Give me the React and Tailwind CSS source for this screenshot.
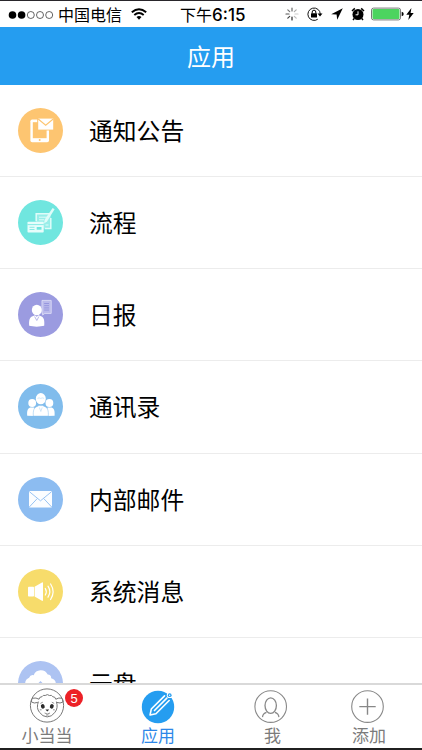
import React from "react";

const W = "#fff";

function Disc({ color, children }) {
  return (
    <svg viewBox="0 0 45 45" className="block size-[45px] shrink-0">
      <circle cx="22.5" cy="22.5" r="22.5" fill={color} />
      {children}
    </svg>
  );
}

function NoticeIcon() {
  const c = "#fdc571";
  return (
    <Disc color={c}>
      <rect x="12.4" y="11.5" width="18.6" height="22.7" rx="1.8" fill={W} />
      <rect x="14.8" y="14.2" width="13.8" height="16" fill={c} />
      <circle cx="21.7" cy="32" r="1" fill={c} />
      <path d="M19.2 9.7h16.5v12.8H19.2z" fill={c} />
      <path d="M20.2 10.6h15v11h-15z" fill={W} />
      <path d="M20.2 11l7.5 6.2 7.5-6.2" fill="none" stroke={c} strokeWidth="1.1" />
    </Disc>
  );
}

function FlowIcon() {
  const c = "#70e6df";
  return (
    <Disc color={c}>
      <path d="M18.2 13.8h14.6v14.6H18.2z" fill="#98eee9" />
      <g fill="none" stroke="#dffcf9" strokeWidth="1.5">
        <path d="M32 13.8H18.2v7.4M32.8 18v10.4h-6" />
        <path d="M21 17.2h8M21 19.8h5M27.5 25h3" strokeWidth="1" />
      </g>
      <path d="M34.6 8l2 1.2-7.6 12.2-2.9 2.2.5-3.8z" fill="#dffcf9" />
      <rect x="9.5" y="21.7" width="16.2" height="10.8" rx="0.8" fill="#e6fdfb" />
      <path d="M9.5 24.6h16.2M11.5 27.3h5M11.5 29.5h5" stroke={c} strokeWidth="0.8" />
      <rect x="18.7" y="27" width="4.8" height="2.7" fill={c} />
    </Disc>
  );
}

function DailyIcon() {
  const c = "#9b9be0";
  return (
    <Disc color={c}>
      <path d="M24 8.4h9.2v13h-6.4L24.6 23l.2-1.6H24z" fill="#babaeb" stroke="#dcdcf6" strokeWidth="0.9" />
      <path d="M26.2 11.5h4.8M26.2 13.7h4.8M26.2 15.9h4.8M26.2 18.1h4.8" stroke="#9292dc" strokeWidth="0.9" />
      <ellipse cx="18.8" cy="18" rx="5" ry="5.3" fill={W} />
      <path d="M11.2 33.8c-.4-5 .2-8.6 3.3-9.6l2.5-1 1.7 1.5 1.9-1.5 2.5 1c3 1 3.6 4.6 3.1 9.6-4 1.1-11 1.1-15 0z" fill={W} />
      <path d="M16.6 24.5l2.2 4 2.1-4" fill="none" stroke={c} strokeWidth="0.7" />
    </Disc>
  );
}

function ContactsIcon() {
  const c = "#80bcec";
  return (
    <Disc color={c}>
      <g fill={W}>
        <circle cx="14.2" cy="19" r="3.9" />
        <circle cx="31.4" cy="19" r="3.9" />
        <path d="M9.2 31.8c-.3-4.8.3-7.3 3-8.2h4l1.2 8.4zM36.6 31.8c.3-4.8-.3-7.3-3-8.2h-4L28.2 32z" />
      </g>
      <path d="M15.3 32.1c-.3-5.6.5-8.6 4-9.7l1.6-.8h3.8l1.6.8c3.5 1.1 4.3 4.1 4 9.7z" fill={W} stroke={c} strokeWidth="0.5" />
      <ellipse cx="22.8" cy="14.7" rx="5" ry="5.6" fill={W} />
      <path d="M19.5 14.4q1.6-1 3.2 0 1.7-1 3.4 0M21.4 23.5l1.4 4 1.4-4" fill="none" stroke="#bfdcf5" strokeWidth="0.7" />
    </Disc>
  );
}

function MailIcon() {
  const c = "#8cbcf1";
  return (
    <Disc color={c}>
      <rect x="11" y="14" width="23" height="16.5" rx="0.8" fill="#fbfdff" />
      <path d="M11.3 14.6l11.2 9.2 11.2-9.2M11.3 30l8-8.5M33.7 30l-8-8.5" fill="none" stroke={c} strokeWidth="0.9" />
    </Disc>
  );
}

function SystemIcon() {
  return (
    <Disc color="#f7dc6b">
      <rect x="10" y="17.8" width="6" height="9.7" rx="0.8" fill={W} />
      <path d="M16.6 17.7l7.4-4.3q1-.5 1 .7v17q0 1.2-1 .7l-7.4-4.3z" fill={W} />
      <path d="M27.3 19.5q2 3.2 0 6.5M30 17.2q3.6 5.5 0 11M32.6 15q5 7.8 0 15.5" fill="none" stroke={W} strokeWidth="1.2" strokeLinecap="round" />
    </Disc>
  );
}

function CloudIcon() {
  return (
    <Disc color="#adc3f2">
      <path d="M12.5 29a6.4 6.4 0 0 1-1.4-12.2 4 4 0 0 1 4.6-2.6 7.6 7.6 0 0 1 14-.6 3.6 3.6 0 0 1 3.5 3.6A6 6 0 0 1 32.5 29z" fill={W} />
      <path d="M22.5 20l-4 4h8z" fill="#adc3f2" />
    </Disc>
  );
}

const rows = [
  ["通知公告", NoticeIcon],
  ["流程", FlowIcon],
  ["日报", DailyIcon],
  ["通讯录", ContactsIcon],
  ["内部邮件", MailIcon],
  ["系统消息", SystemIcon],
  ["云盘", CloudIcon],
];

function StatusBar() {
  return (
    <div className="flex h-[27px] shrink-0 items-center border-t border-[#29262b] bg-white text-black">
      <svg viewBox="0 0 46 10" className="ml-2 mt-px h-[10px] w-[46px] shrink-0">
        <circle cx="4.5" cy="5" r="3.8" />
        <circle cx="13.6" cy="5" r="3.8" />
        <g fill="none" stroke="#222" strokeWidth="0.7">
          <circle cx="22.8" cy="5" r="3.5" />
          <circle cx="32" cy="5" r="3.5" />
          <circle cx="41.2" cy="5" r="3.5" />
        </g>
      </svg>
      <span className="ml-[4px] w-[65px] shrink-0 pt-[3px] text-[16px] leading-[24px] whitespace-nowrap">中国电信</span>
      <svg viewBox="0 0 16 12" className="ml-2 h-[12px] w-[16px] shrink-0" fill="none" stroke="#000" strokeWidth="1.9">
        <path d="M.8 4.2q7.2-6 14.4 0M3.3 7q4.7-4 9.4 0" />
        <path d="M5.5 8.9q2.5-2 5 0L8 11.7z" fill="#000" stroke="none" />
      </svg>
      <span className="ml-[33px] flex w-[71px] shrink-0 items-center text-[16px] leading-[24px] whitespace-nowrap">
        <span className="pt-[3px]">下午</span>
        <span className="pt-[2px] font-['Inter'] text-[17px] font-medium">6:15</span>
      </span>
      <svg viewBox="0 0 14 14" className="ml-[34px] size-[14px] shrink-0" fill="none" strokeWidth="1.2" strokeLinecap="round">
        <path d="M7 1v3" stroke="#666" />
        <path d="M11.2 2.8L9.3 4.7" stroke="#aaa" />
        <path d="M13 7h-3" stroke="#ccc" />
        <path d="M11.2 11.2L9.3 9.3" stroke="#bbb" />
        <path d="M7 13v-3" stroke="#222" />
        <path d="M2.8 11.2l1.9-1.9" stroke="#444" />
        <path d="M1 7h3" stroke="#555" />
        <path d="M2.8 2.8l1.9 1.9" stroke="#777" />
      </svg>
      <svg viewBox="0 0 16 14" className="ml-[8px] h-[14px] w-[16px] shrink-0">
        <path d="M10.8 12.2A6.2 6.2 0 1 1 13.3 7" fill="none" stroke="#111" strokeWidth="1" />
        <path d="M10.5 6.5h5L13 9.5z" />
        <rect x="4" y="6.2" width="6" height="4.4" rx=".5" />
        <path d="M5.2 6.5V5a1.8 1.8 0 0 1 3.6 0v1.5" fill="none" stroke="#000" strokeWidth="1" />
      </svg>
      <svg viewBox="0 0 12 12" className="ml-[8px] size-[12px] shrink-0">
        <path d="M11.8.2L.2 6.2l5.4.4.6 5.2z" />
      </svg>
      <svg viewBox="0 0 14 14" className="ml-[8px] size-[14px] shrink-0">
        <circle cx="7" cy="7.5" r="5.5" />
        <path d="M1 4L3.8 1.4M13 4l-2.8-2.6M3.2 11.5L2 13M10.8 11.5L12 13" stroke="#000" strokeWidth="1.5" />
        <path d="M7 4.3v3.5H4.6" fill="none" stroke="#fff" strokeWidth="1" />
      </svg>
      <svg viewBox="0 0 34 14" className="ml-[5px] h-[14px] w-[34px] shrink-0">
        <rect x="1.5" y="1.1" width="29" height="11.8" rx="2" fill="#fff" stroke="#777" strokeWidth="1" />
        <rect x="2.5" y="2.1" width="27" height="9.8" rx="1" fill="#4cd45f" />
        <path d="M31.7 4.8q2 .5 2 2.2t-2 2.2z" />
      </svg>
      <svg viewBox="0 0 8 12" className="ml-[2px] h-[12px] w-[8px] shrink-0">
        <path d="M5.4 0L.3 6.7h3L2.3 12 7.7 5H4.6z" />
      </svg>
    </div>
  );
}

function LambIcon() {
  return (
    <svg viewBox="0 0 36 36" className="block size-[36px]" fill="none" stroke="#777" strokeWidth="1">
      <circle cx="18" cy="17.5" r="16.6" />
      <path d="M10 11.3q.3-2.6 3-2.6 1-2 3.2-1.2 2.2-1.8 4.2 0 2.4-.8 3.4 1.2 2.6 0 3 2.6" />
      <path d="M10 11.2Q7 9.4 3.8 10.2q-1.6 1.2-1.4 3.8 2.8 1.8 6.4.4M26.8 11.2q3-1.8 6-1 1.4 1.2 1.2 3.8-2.8 1.8-6.2.4" />
      <path d="M9.4 13.6q-2.4 6.4 1 10.6 3.2 4.6 7.8 4.7 4.8 0 7.8-4.7 3.4-4.2 1.4-10.6" />
      <g fill="#2b2b2b" stroke="none">
        <ellipse cx="13.8" cy="18.4" rx="1.9" ry="2.3" transform="rotate(-20 13.8 18.4)" />
        <ellipse cx="22.8" cy="18.4" rx="1.9" ry="2.3" transform="rotate(20 22.8 18.4)" />
        <path d="M16.4 21.6h3.8l-1.9 2z" />
      </g>
      <path d="M11.4 15.4l2.4-1.2M25.2 15.4l-2.4-1.2M15.6 25q2.7 2 5.4 0M17 27h2.6M10.8 21.8h1.8M24 21.8h1.8" strokeWidth="0.8" />
    </svg>
  );
}

function PencilIcon() {
  return (
    <svg viewBox="0 0 34 34" className="block size-[34px]">
      <circle cx="17" cy="17" r="16.2" fill="#259df0" />
      <g transform="rotate(45 17 17)" fill="none" stroke="#fff" strokeWidth="1.6" strokeLinejoin="round" strokeLinecap="round">
        <path d="M13.7 4.5v18.7l3.3 5 3.3-5V4.5M17 4.5v17.5" />
      </g>
      <circle cx="28.7" cy="5.2" r="2.9" fill="#fff" />
      <circle cx="28.7" cy="5.2" r="1.9" fill="#259df0" />
      <circle cx="28.7" cy="5.2" r="0.7" fill="#fff" />
    </svg>
  );
}

function MeIcon() {
  return (
    <svg viewBox="0 0 34 34" className="block size-[34px]" fill="none" stroke="#888" strokeWidth="1.1">
      <circle cx="16.7" cy="16.6" r="15.8" />
      <ellipse cx="16.7" cy="15.6" rx="5.7" ry="7.7" strokeWidth="1.3" />
      <path d="M12.5 22.3q-3.8 1.1-4 4.8M20.9 22.3q3.8 1.1 4 4.8" strokeWidth="1.2" />
    </svg>
  );
}

function AddIcon() {
  return (
    <svg viewBox="0 0 34 34" className="block size-[34px]" fill="none" stroke="#888">
      <circle cx="16.5" cy="16.6" r="15.8" strokeWidth="1.1" />
      <path d="M16.5 8.4v16.4M8.3 16.6h16.4" strokeWidth="1.4" />
    </svg>
  );
}

function Tab({ className, label, labelClass = "", children }) {
  return (
    <div className={"flex h-full shrink-0 flex-col items-center " + className}>
      <div className="flex h-[39px] items-end">{children}</div>
      <span className={"mt-[2px] text-[17px] leading-[22px] whitespace-nowrap " + labelClass}>{label}</span>
    </div>
  );
}

export default function App() {
  return (
    <div className="flex h-[750px] w-[422px] flex-col overflow-hidden bg-white font-['Liberation_Sans','Noto_Sans_CJK_SC',sans-serif]">
      <StatusBar />
      <header className="flex h-[58px] shrink-0 items-center justify-center bg-[#259df0] pt-[3px] text-[24px] font-normal text-white">
        <h1 className="leading-[36px]">应用</h1>
      </header>
      <main className="min-h-0 flex-1 overflow-hidden">
        {rows.map(([label, Icon]) => (
          <div key={label} className="flex h-[92.15px] items-center border-b border-[#ececec] pl-[18px]">
            <Icon />
            <span className="ml-[26px] pt-[3px] text-[23.8px] leading-[36px] text-black">{label}</span>
          </div>
        ))}
      </main>
      <nav className="flex h-[67px] shrink-0 border-t-2 border-b-2 border-t-[#d9d9d9] border-b-[#202020] bg-white text-[#7b7b7b]">
        <Tab className="w-[94px]" label="小当当">
          <div className="relative">
            <LambIcon />
            <span className="absolute top-[1px] left-[36px] flex size-[18px] items-center justify-center rounded-full bg-[#ec2127] text-[13px] leading-none text-white">5</span>
          </div>
        </Tab>
        <Tab className="w-[128px] text-[#2c87e8]" label="应用"><PencilIcon /></Tab>
        <Tab className="w-[98px]" label="我" labelClass="pl-[3px]"><MeIcon /></Tab>
        <Tab className="w-[96px]" label="添加" labelClass="pl-[2px]"><AddIcon /></Tab>
      </nav>
    </div>
  );
}
